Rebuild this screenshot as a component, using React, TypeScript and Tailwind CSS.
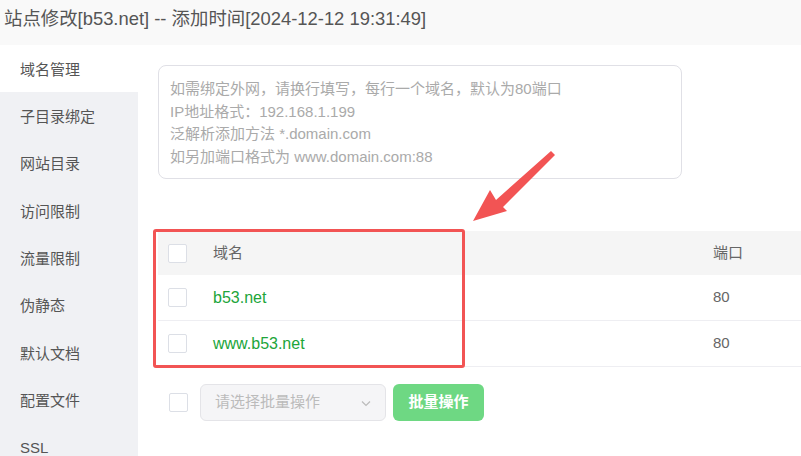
import React from "react";

const menu = [
  "域名管理",
  "子目录绑定",
  "网站目录",
  "访问限制",
  "流量限制",
  "伪静态",
  "默认文档",
  "配置文件",
  "SSL",
];

const domains = ["b53.net", "www.b53.net"];

const hints = [
  "如需绑定外网，请换行填写，每行一个域名，默认为80端口",
  "IP地址格式：192.168.1.199",
  "泛解析添加方法 *.domain.com",
  "如另加端口格式为 www.domain.com:88",
];

const Checkbox = () => (
  <span className="block w-[19px] h-[19px] rounded-[2px] border border-[#dcdfe6] bg-white" />
);

export default function App() {
  return (
    <div
      className="w-[801px] h-[456px] overflow-hidden bg-white text-[#555]"
      style={{ fontFamily: '"Liberation Sans", "Noto Sans CJK SC", sans-serif' }}
    >
      <div className="h-[45px] bg-[#f9f9f9] pl-[4px] flex items-center text-[18.4px] text-[#555] pb-[7px]">
        站点修改[b53.net] -- 添加时间[2024-12-12 19:31:49]
      </div>

      <div className="flex h-[411px]">
        <div className="w-[138px] shrink-0 bg-[#f0f1f4]">
          {menu.map((item, i) => (
            <div
              key={item}
              className={`h-[47.3px] pl-[20px] pt-[3px] flex items-center text-[15px] text-[#555] ${
                i === 0 ? "bg-white" : ""
              }`}
            >
              {item}
            </div>
          ))}
        </div>

        <div className="flex-1 pl-[20px] pt-[20px] relative overflow-hidden">
          {/* domain input */}
          <div className="w-[524px] h-[114px] rounded-[8px] border border-[#e0e0e6] pl-[11px] pt-[12px] text-[15px] leading-[22.5px] text-[#aaa]">
            {hints.map((h) => (
              <div key={h}>{h}</div>
            ))}
          </div>

          {/* table */}
          <div className="mt-[52px] w-[680px] text-[15px]">
            <div className="h-[44px] bg-[#f5f5f5] flex items-center text-[#666]">
              <div className="w-[55px] pl-[10px]">
                <Checkbox />
              </div>
              <div className="w-[500px]">域名</div>
              <div>端口</div>
            </div>
            {domains.map((d) => (
              <div key={d} className="h-[46px] border-b border-[#eeeef2] flex items-center">
                <div className="w-[55px] pl-[10px]">
                  <Checkbox />
                </div>
                <div className="w-[500px] text-[16px] text-[#20a53a]">{d}</div>
                <div className="text-[#666]">80</div>
              </div>
            ))}
          </div>

          {/* batch ops */}
          <div className="mt-[17px] flex items-center">
            <div className="pl-[11px] pr-[12px]">
              <Checkbox />
            </div>
            <div className="w-[186px] h-[37px] rounded-[6px] border border-[#e4e4e8] bg-[#f5f5f7] flex items-center justify-between pl-[14px] pr-[12px] text-[15px] text-[#bbb]">
              <span>请选择批量操作</span>
              <svg width="14" height="14" viewBox="0 0 14 14" fill="none">
                <path d="M3 5.5 7 9.5 11 5.5" stroke="#bbb" strokeWidth="1.2" />
              </svg>
            </div>
            <button className="ml-[7px] w-[91px] h-[37px] rounded-[6px] bg-[#6ed883] text-white text-[15px] font-bold">
              批量操作
            </button>
          </div>

          {/* annotation box */}
          <div className="absolute left-[15px] top-[184px] w-[312px] h-[139px] border-[3px] border-[#f25454] rounded-[3px]" />

          {/* annotation arrow */}
          <svg
            className="absolute left-0 top-0"
            width="663"
            height="411"
            viewBox="138 45 663 411"
          >
            <polygon
              points="473,221 490,190 496,200 551,151 555,155 503,207 507,211"
              fill="#f25454"
            />
          </svg>
        </div>
      </div>
    </div>
  );
}
